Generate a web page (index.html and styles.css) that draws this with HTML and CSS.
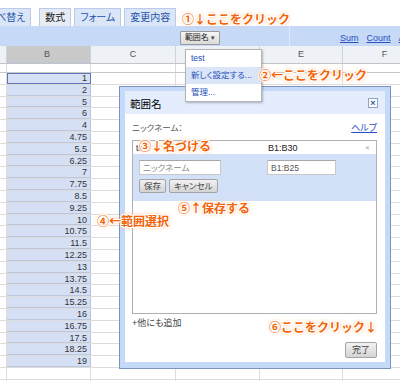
FILE: index.html
```html
<!DOCTYPE html>
<html lang="ja">
<head>
  <meta charset="UTF-8">
  <title>範囲名 | スプレッドシート</title>
  <link rel="stylesheet" href="styles.css">
</head>
<body>
  <div class="tabs">
    <span class="tab">並べ替え</span>
    <span class="tab active">数式</span>
    <span class="tab">フォーム</span>
    <span class="tab">変更内容</span>
  </div>

  <div class="toolbar">
    <div class="tb-left">
      <button class="range-btn">範囲名 <span class="caret">▾</span></button>
    </div>
    <div class="tb-right">
      <a href="#">Sum</a>
      <a href="#">Count</a>
      <a href="#">Avg</a>
    </div>
  </div>

  <div class="grid">
    <div class="row head"><span class="c"></span><span class="c b">B</span><span class="c">C</span><span class="c">D</span><span class="c">E</span><span class="c">F</span></div>
    <div class="row frozen"><span class="c"></span><span class="c"></span><span class="c"></span><span class="c"></span><span class="c"></span><span class="c"></span></div>
    <div class="row"><span class="c"></span><span class="c b active">1</span><span class="c"></span><span class="c"></span><span class="c"></span><span class="c"></span></div>
    <div class="row"><span class="c"></span><span class="c b">2</span><span class="c"></span><span class="c"></span><span class="c"></span><span class="c"></span></div>
    <div class="row"><span class="c"></span><span class="c b">5</span><span class="c"></span><span class="c"></span><span class="c"></span><span class="c"></span></div>
    <div class="row"><span class="c"></span><span class="c b">6</span><span class="c"></span><span class="c"></span><span class="c"></span><span class="c"></span></div>
    <div class="row"><span class="c"></span><span class="c b">4</span><span class="c"></span><span class="c"></span><span class="c"></span><span class="c"></span></div>
    <div class="row"><span class="c"></span><span class="c b">4.75</span><span class="c"></span><span class="c"></span><span class="c"></span><span class="c"></span></div>
    <div class="row"><span class="c"></span><span class="c b">5.5</span><span class="c"></span><span class="c"></span><span class="c"></span><span class="c"></span></div>
    <div class="row"><span class="c"></span><span class="c b">6.25</span><span class="c"></span><span class="c"></span><span class="c"></span><span class="c"></span></div>
    <div class="row"><span class="c"></span><span class="c b">7</span><span class="c"></span><span class="c"></span><span class="c"></span><span class="c"></span></div>
    <div class="row"><span class="c"></span><span class="c b">7.75</span><span class="c"></span><span class="c"></span><span class="c"></span><span class="c"></span></div>
    <div class="row"><span class="c"></span><span class="c b">8.5</span><span class="c"></span><span class="c"></span><span class="c"></span><span class="c"></span></div>
    <div class="row"><span class="c"></span><span class="c b">9.25</span><span class="c"></span><span class="c"></span><span class="c"></span><span class="c"></span></div>
    <div class="row"><span class="c"></span><span class="c b">10</span><span class="c"></span><span class="c"></span><span class="c"></span><span class="c"></span></div>
    <div class="row"><span class="c"></span><span class="c b">10.75</span><span class="c"></span><span class="c"></span><span class="c"></span><span class="c"></span></div>
    <div class="row"><span class="c"></span><span class="c b">11.5</span><span class="c"></span><span class="c"></span><span class="c"></span><span class="c"></span></div>
    <div class="row"><span class="c"></span><span class="c b">12.25</span><span class="c"></span><span class="c"></span><span class="c"></span><span class="c"></span></div>
    <div class="row"><span class="c"></span><span class="c b">13</span><span class="c"></span><span class="c"></span><span class="c"></span><span class="c"></span></div>
    <div class="row"><span class="c"></span><span class="c b">13.75</span><span class="c"></span><span class="c"></span><span class="c"></span><span class="c"></span></div>
    <div class="row"><span class="c"></span><span class="c b">14.5</span><span class="c"></span><span class="c"></span><span class="c"></span><span class="c"></span></div>
    <div class="row"><span class="c"></span><span class="c b">15.25</span><span class="c"></span><span class="c"></span><span class="c"></span><span class="c"></span></div>
    <div class="row"><span class="c"></span><span class="c b">16</span><span class="c"></span><span class="c"></span><span class="c"></span><span class="c"></span></div>
    <div class="row"><span class="c"></span><span class="c b">16.75</span><span class="c"></span><span class="c"></span><span class="c"></span><span class="c"></span></div>
    <div class="row"><span class="c"></span><span class="c b">17.5</span><span class="c"></span><span class="c"></span><span class="c"></span><span class="c"></span></div>
    <div class="row"><span class="c"></span><span class="c b">18.25</span><span class="c"></span><span class="c"></span><span class="c"></span><span class="c"></span></div>
    <div class="row"><span class="c"></span><span class="c b">19</span><span class="c"></span><span class="c"></span><span class="c"></span><span class="c"></span></div>
    <div class="row"><span class="c"></span><span class="c"></span><span class="c"></span><span class="c"></span><span class="c"></span><span class="c"></span></div>
    <div class="row"><span class="c"></span><span class="c"></span><span class="c"></span><span class="c"></span><span class="c"></span><span class="c"></span></div>
  </div>

  <!-- dropdown from the 範囲名 button -->
  <div class="menu">
    <div class="menu-item">test</div>
    <div class="menu-item hover">新しく設定する...</div>
    <div class="menu-item">管理...</div>
  </div>

  <div class="dialog">
    <div class="dlg-title">
      <span>範囲名</span>
      <span class="close">×</span>
    </div>
    <div class="dlg-body">
      <div class="label-row">
        <span>ニックネーム：</span>
        <a href="#">ヘルプ</a>
      </div>
      <div class="list">
        <div class="item">
          <span class="nm">test</span>
          <span class="rg">B1:B30</span>
          <span class="del">×</span>
        </div>
        <div class="edit">
          <div class="inputs">
            <input class="in-name" placeholder="ニックネーム">
            <input class="in-range" value="B1:B25">
          </div>
          <div class="btns">
            <button class="btn">保存</button>
            <button class="btn">キャンセル</button>
          </div>
        </div>
      </div>
      <div class="add">+他にも追加</div>
      <div class="foot"><button class="btn done">完了</button></div>
    </div>
  </div>

  <!-- annotations -->
  <div class="note n1">①↓ここをクリック</div>
  <div class="note n2">②←ここをクリック</div>
  <div class="note n3">③↓名づける</div>
  <div class="note n4">④←範囲選択</div>
  <div class="note n5">⑤↑保存する</div>
  <div class="note n6">⑥ここをクリック↓</div>
</body>
</html>
```

FILE: styles.css
```css
body {
  margin: 0;
  width: 400px;
  height: 381px;
  overflow: hidden;
  position: relative;
  background: #fff;
  color: #333;
  font-family: "Liberation Sans", "Noto Sans CJK JP", sans-serif;
}

/* sheet tabs */
.tabs {
  height: 26px;
  display: flex;
  align-items: flex-end;
  gap: 3px;
  margin-left: -20px;
}
.tab {
  height: 18px;
  line-height: 18px;
  padding: 0 5px;
  font-size: 10px;
  font-feature-settings: "palt";
  background: #dae6f8;
  border: 1px solid #b9cbe8;
  border-bottom: none;
  color: #2452a8;
  box-sizing: border-box;
}
.tab:first-child {
  margin-right: 5px;
}
.tab.active {
  background: #e7ecf4;
  color: #222;
}

/* toolbar */
.toolbar {
  height: 20px;
  display: flex;
  background: #c6d9f7;
}
.tb-left {
  flex: none;
  width: 290px;
  padding-left: 180px;
  box-sizing: border-box;
  display: flex;
  align-items: center;
  border-right: 1px solid #dfe9fa;
}
.range-btn {
  height: 14px;
  width: 40px;
  margin-top: 3px;
  padding: 0 2px;
  font-family: inherit;
  font-size: 8px;
  color: #222;
  background: linear-gradient(#f6f6f6, #dadada);
  border: 1px solid #9a9a9a;
  border-radius: 1px;
  line-height: 12px;
}
.caret {
  font-size: 7px;
  color: #444;
}
.tb-right {
  flex: none;
  display: flex;
  align-items: center;
  gap: 8px;
  padding: 3px 0 0 50px;
  white-space: nowrap;
}
.tb-right a {
  font-size: 9px;
  color: #2a4fc0;
}

/* grid */
.row {
  display: flex;
  height: 11.8px;
  box-sizing: border-box;
  border-bottom: 1px solid #dcdcdc;
}
.c {
  flex: none;
  box-sizing: border-box;
  border-right: 1px solid #dcdcdc;
  font-size: 9px;
  line-height: 10.5px;
}
.c:nth-child(1) { width: 7px; }
.c:nth-child(2) { width: 84px; }
.c:nth-child(3) { width: 85px; }
.c:nth-child(4) { width: 84px; }
.c:nth-child(5) { width: 83px; }
.c:nth-child(6) { width: 84px; }

.row.head {
  height: 18px;
  background: #eef1f6;
  border-bottom: 1px solid #c4c4c4;
}
.row.head .c {
  text-align: center;
  line-height: 17px;
  color: #555;
  border-right-color: #cdd3dc;
}
.row.head .c.b {
  background: #c9c9c9;
}
.row.frozen {
  height: 9px;
  border-bottom-color: #c8c8c8;
}
.c.b {
  background: #d6e0f4;
  text-align: right;
  padding-right: 3px;
  color: #333;
  border-right-color: #b9c4dc;
}
.row .c.b {
  box-shadow: inset 0 -1px 0 #bcc6dc;
}
.c.active {
  outline: 1px solid #5c78b8;
  outline-offset: -1px;
}

/* dropdown */
.menu {
  position: absolute;
  left: 185px;
  top: 49px;
  width: 75px;
  background: #fff;
  border: 1px solid #b4b4b4;
  box-shadow: 1px 1px 2px rgba(0, 0, 0, 0.25);
  z-index: 3;
  font-size: 8.5px;
  font-feature-settings: "palt";
}
.menu-item {
  height: 17px;
  line-height: 17px;
  padding-left: 5px;
  color: #2550b8;
  white-space: nowrap;
}
.menu-item.hover {
  background: #dbe5f8;
}

/* dialog */
.dialog {
  position: absolute;
  left: 119px;
  top: 86px;
  width: 272px;
  height: 283px;
  box-sizing: border-box;
  padding: 4px 5px 6px;
  background: #c5d9f8;
  border: 1px solid #7d93bb;
  display: flex;
  flex-direction: column;
  z-index: 2;
  font-feature-settings: "palt";
}
.dlg-title {
  height: 22px;
  flex: none;
  display: flex;
  align-items: center;
  justify-content: space-between;
  padding: 1px 7px 0 5px;
  background: #e3edfc;
  font-size: 10.5px;
  color: #000;
}
.close {
  width: 10px;
  height: 10px;
  box-sizing: border-box;
  border: 1px solid #8ea2c4;
  background: #fff;
  font-size: 9px;
  line-height: 8px;
  text-align: center;
  color: #3d5a8c;
  font-weight: bold;
}
.dlg-body {
  flex: 1;
  background: #fff;
  padding: 8px 8px 0 7px;
  font-size: 8.5px;
  color: #444;
}
.label-row {
  display: flex;
  justify-content: space-between;
  height: 12px;
  line-height: 12px;
  color: #555;
}
.label-row a {
  color: #2a4fc0;
  font-size: 9px;
}
.list {
  margin-top: 6px;
  height: 174px;
  box-sizing: border-box;
  border: 1px solid #b0b0b0;
}
.item {
  height: 13px;
  display: flex;
  align-items: center;
  padding-left: 3px;
  color: #222;
}
.nm {
  width: 132px;
}
.rg {
  flex: 1;
  font-size: 9px;
}
.del {
  width: 11px;
  color: #999;
  font-size: 8px;
}
.edit {
  height: 47px;
  background: #d3e1f8;
  padding: 6px 0 0 6px;
  box-sizing: border-box;
}
.inputs {
  display: flex;
  gap: 46px;
}
.inputs input {
  height: 15px;
  box-sizing: border-box;
  border: 1px solid #c8c8c8;
  border-top-color: #a8a8a8;
  padding: 0 3px;
  font-family: inherit;
  font-size: 8.5px;
  font-feature-settings: "palt";
  color: #555;
}
.in-name { width: 82px; }
.in-range { width: 69px; }
.in-name::placeholder {
  color: #888;
}
.btns {
  display: flex;
  gap: 3px;
  margin-top: 4px;
}
.btn {
  height: 14px;
  padding: 0 4px;
  font-family: inherit;
  font-size: 8.5px;
  font-feature-settings: "palt";
  line-height: 12px;
  color: #444;
  background: linear-gradient(#f2f2f2, #d4d4d4);
  border: 1px solid #a4a4a4;
  border-radius: 2px;
}
.add {
  margin-top: 3px;
  height: 12px;
  line-height: 12px;
  color: #444;
  font-size: 9px;
}
.foot {
  display: flex;
  justify-content: flex-end;
  margin-top: 13px;
}
.btn.done {
  width: 32px;
  height: 16px;
  font-size: 9px;
}

/* orange annotations */
.note {
  position: absolute;
  z-index: 5;
  font-family: "Noto Sans CJK JP", sans-serif;
  font-weight: bold;
  font-size: 12px;
  line-height: 16px;
  white-space: nowrap;
  color: #f26408;
  text-shadow:
    1px 0 0 #fff, -1px 0 0 #fff, 0 1px 0 #fff, 0 -1px 0 #fff,
    1px 1px 0 #fff, -1px -1px 0 #fff, 1px -1px 0 #fff, -1px 1px 0 #fff,
    0 0 3px #f7a35c, 0 0 5px #f9c08a;
}
.n1 { left: 182px; top: 11px; }
.n2 { left: 259px; top: 67px; }
.n3 { left: 139px; top: 138px; }
.n4 { left: 97px; top: 213px; }
.n5 { left: 178px; top: 200px; }
.n6 { left: 269px; top: 319px; }
```
